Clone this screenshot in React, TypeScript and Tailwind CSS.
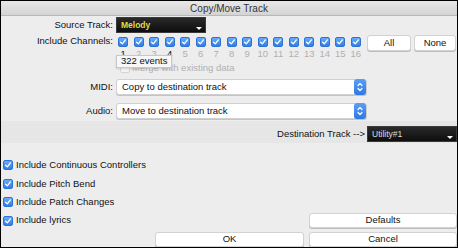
function Check({ faint = false }: { faint?: boolean }) {
  if (faint) {
    return <span className="block w-[10px] h-[10px] rounded-[2px] border border-[#d4d4d4] bg-[#f4f4f4]" />;
  }
  return (
    <span className="flex items-center justify-center w-[10px] h-[10px] rounded-[2px] bg-gradient-to-b from-[#6aaaf9] to-[#2f7de6] border border-[#2b73d6]">
      <svg width="8" height="8" viewBox="0 0 8 8">
        <path d="M1.6 4.2 L3.3 5.9 L6.4 1.9" fill="none" stroke="white" strokeWidth="1.3" strokeLinecap="round" strokeLinejoin="round" />
      </svg>
    </span>
  );
}

function Stepper() {
  return (
    <span className="flex items-center justify-center w-[12px] h-[16px] rounded-[3px] bg-gradient-to-b from-[#5b9ef6] to-[#2c78e4]">
      <svg width="8" height="12" viewBox="0 0 8 12">
        <path d="M2 4.5 L4 2.5 L6 4.5 M2 7.5 L4 9.5 L6 7.5" fill="none" stroke="white" strokeWidth="1.2" strokeLinecap="round" strokeLinejoin="round" />
      </svg>
    </span>
  );
}

function DarkDrop({ text, width, color }: { text: string; width: string; color: string }) {
  return (
    <div className={`relative h-[16px] ${width} bg-gradient-to-b from-[#2a2a2a] to-[#0e0e0e] border border-[#3a3a3a] flex items-center pl-[4px]`}>
      <span className={`text-[8.5px] font-bold ${color}`}>{text}</span>
      <span className="absolute right-[3px] bottom-[2px] w-0 h-0 border-l-[3px] border-r-[3px] border-t-[3px] border-l-transparent border-r-transparent border-t-white" />
    </div>
  );
}

function Select({ text }: { text: string }) {
  return (
    <div className="ml-[3px] flex items-center w-[251px] h-[16px] bg-white rounded-[3px] border border-[#d0d0d0] shadow-[0_1px_0_#c4c4c4]">
      <span className="flex-1 pl-[5px] text-[9.5px] text-[#111]">{text}</span>
      <Stepper />
    </div>
  );
}

function Btn({ label, width }: { label: string; width: string }) {
  return (
    <div className={`${width} h-[15px] flex items-center justify-center bg-white rounded-[3px] border border-[#d2d2d2] shadow-[0_1px_0_#bdbdbd] text-[9.5px] text-[#111]`}>
      {label}
    </div>
  );
}

const channels = Array.from({ length: 16 }, (_, i) => i + 1);

export default function App() {
  return (
    <div
      className="w-[458px] h-[248px] border border-black bg-[#ededed] flex flex-col overflow-hidden"
      style={{ fontFamily: '"Liberation Sans", Arial, sans-serif' }}
    >
      <div className="h-[15px] flex items-center justify-center bg-gradient-to-b from-[#e8e8e8] to-[#d4d4d4] border-b border-[#b8b8b8] text-[10px] text-[#333]">
        Copy/Move Track
      </div>

      <div className="relative flex flex-col">
        {/* source track */}
        <div className="mt-[1px] flex items-center h-[16px]">
          <div className="w-[112px] text-right text-[9.5px] text-[#111]">Source Track:</div>
          <div className="ml-[3px]">
            <DarkDrop text="Melody" width="w-[90px]" color="text-[#e6dc3c]" />
          </div>
        </div>

        {/* channels */}
        <div className="mt-[2px] flex items-start">
          <div className="w-[112px] h-[12px] flex items-center justify-end text-[9.5px] text-[#111]">Include Channels:</div>
          <div className="ml-[2.5px] grid grid-cols-[repeat(16,15.5px)] pt-[2px]">
            {channels.map((n) => (
              <div key={n} className="flex flex-col items-center">
                <Check />
                <span
                  className={`mt-[2px] leading-[10px] text-[9.5px] ${n === 1 || n === 4 ? "text-[#111]" : "text-[#b0b0b0]"}`}
                >
                  {n}
                </span>
              </div>
            ))}
          </div>
          <div className="ml-[3.5px] flex gap-[3px]">
            <Btn label="All" width="w-[44px] h-[16px]" />
            <Btn label="None" width="w-[42px] h-[16px]" />
          </div>
        </div>

        {/* merge */}
        <div className="mt-[3px] h-[12px] flex items-center pl-[119px]">
          <Check faint />
          <span className="ml-[2px] text-[9.5px] text-[#b0b0b0]">Merge with existing data</span>
        </div>

        <div className="absolute left-[115px] top-[39px] h-[13px] px-[4px] flex items-center bg-[#f7f7f7] border border-[#c8c8c8] text-[9.5px] text-[#111] shadow-[0_1px_2px_rgba(0,0,0,0.15)]">
          322 events
        </div>

        {/* midi */}
        <div className="mt-[5px] flex items-center h-[16px]">
          <div className="w-[112px] text-right text-[9.5px] text-[#111]">MIDI:</div>
          <Select text="Copy to destination track" />
        </div>

        {/* audio */}
        <div className="mt-[8px] flex items-center h-[16px]">
          <div className="w-[112px] text-right text-[9.5px] text-[#111]">Audio:</div>
          <Select text="Move to destination track" />
        </div>

        {/* destination */}
        <div className="mt-[2px] pt-[5px] pb-[1px] bg-[#e6e6e6] flex items-center justify-end">
          <span className="text-[9.5px] text-[#111]">Destination Track --&gt;</span>
          <div className="ml-[2px]">
            <DarkDrop text="Utility#1" width="w-[90px]" color="text-[#dcdcdc] font-normal" />
          </div>
        </div>
      </div>

      {/* options */}
      <div className="flex flex-col">
        <div className="mt-[16px] h-[12px] flex items-center pl-[2px]">
          <Check />
          <span className="ml-[3px] text-[9.5px] text-[#111]">Include Continuous Controllers</span>
        </div>
        <div className="mt-[7px] h-[12px] flex items-center pl-[2px]">
          <Check />
          <span className="ml-[3px] text-[9.5px] text-[#111]">Include Pitch Bend</span>
        </div>
        <div className="mt-[6px] h-[12px] flex items-center pl-[2px]">
          <Check />
          <span className="ml-[3px] text-[9.5px] text-[#111]">Include Patch Changes</span>
        </div>
        <div className="mt-[5px] h-[15px] flex items-center pl-[2px]">
          <Check />
          <span className="ml-[3px] flex-1 text-[9.5px] text-[#111]">Include lyrics</span>
          <Btn label="Defaults" width="w-[148px]" />
        </div>
        <div className="mt-[4px] flex justify-end gap-[5px]">
          <Btn label="OK" width="w-[149px]" />
          <Btn label="Cancel" width="w-[148px]" />
        </div>
      </div>
    </div>
  );
}
